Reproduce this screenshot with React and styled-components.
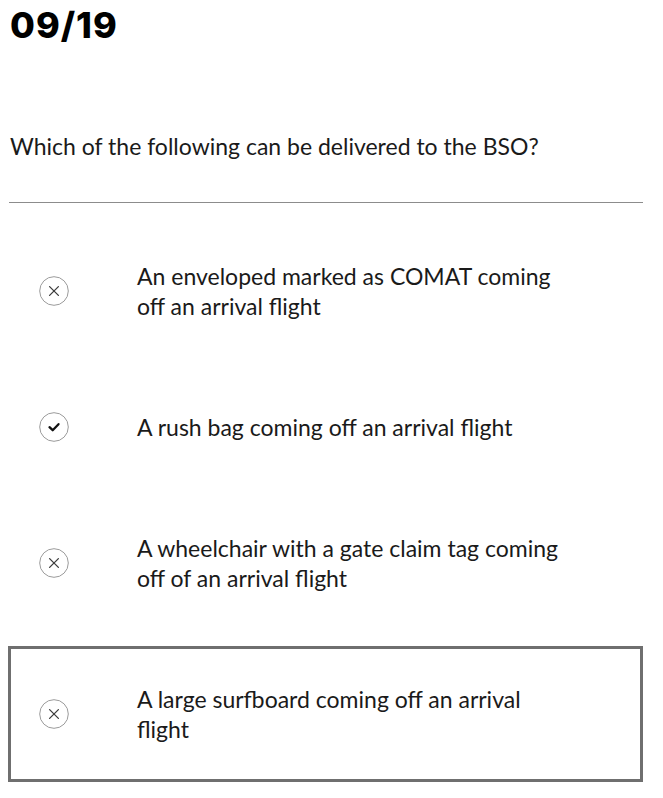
import React from "react";
import styled, { createGlobalStyle } from "styled-components";

const GlobalStyle = createGlobalStyle`
  body {
    margin: 0;
    background: #ffffff;
    font-family: "Lato", "Liberation Sans", sans-serif;
    color: #1c1c1c;
  }
`;

const options = [
  { text: "An enveloped marked as COMAT coming off an arrival flight", correct: false },
  { text: "A rush bag coming off an arrival flight", correct: true },
  { text: "A wheelchair with a gate claim tag coming off of an arrival flight", correct: false },
  { text: "A large surfboard coming off an arrival flight", correct: false, selected: true },
];

const StatusIcon = ({ correct }) => (
  <IconWrap>
    <svg width="30" height="30" viewBox="0 0 30 30">
      <circle cx="15" cy="15" r="14.3" fill="#fff" stroke="#9b9b9b" strokeWidth="1" />
      {correct ? (
        <polyline
          points="10.5,15.2 13.7,18.2 19.5,12.2"
          fill="none"
          stroke="#111"
          strokeWidth="2.3"
          strokeLinecap="round"
          strokeLinejoin="round"
        />
      ) : (
        <g stroke="#3c3c3c" strokeWidth="1.3" strokeLinecap="round">
          <line x1="10.6" y1="10.6" x2="19.4" y2="19.4" />
          <line x1="19.4" y1="10.6" x2="10.6" y2="19.4" />
        </g>
      )}
    </svg>
  </IconWrap>
);

const App = () => {
  return (
    <>
      <GlobalStyle />
      <Page>
        <Counter>09/19</Counter>
        <Question>Which of the following can be delivered to the BSO?</Question>
        <Divider />
        <Options>
          {options.map((o) => (
            <Option key={o.text} selected={o.selected}>
              <StatusIcon correct={o.correct} />
              <OptionText>{o.text}</OptionText>
            </Option>
          ))}
        </Options>
      </Page>
    </>
  );
};

const Page = styled.div`
  width: 635px;
  padding: 0 0 0 8px;
`;

const Counter = styled.h1`
  margin: 0;
  padding: 7px 0 0 2px;
  font-family: "Inter", "Liberation Sans", sans-serif;
  font-weight: 800;
  font-size: 36px;
  line-height: 36px;
  letter-spacing: 1px;
  color: #000;
`;

const Question = styled.p`
  margin: 88px 0 0 2px;
  font-size: 23px;
  line-height: 30px;
  color: #1a1a1a;
`;

const Divider = styled.hr`
  margin: 41px 0 0 1px;
  border: none;
  border-top: 1px solid #8c8c8c;
  height: 0;
`;

const Options = styled.div`
  display: flex;
  flex-direction: column;
  gap: 15px;
  margin-top: 20px;
`;

const Option = styled.div`
  display: flex;
  align-items: center;
  padding: 35px 0 35px 28px;
  border: 3px solid ${(p) => (p.selected ? "#6f6f6f" : "transparent")};
`;

const IconWrap = styled.div`
  width: 30px;
  height: 30px;
  flex-shrink: 0;
  margin-right: 68px;
  svg {
    display: block;
  }
`;

const OptionText = styled.div`
  max-width: 430px;
  font-size: 23px;
  line-height: 30px;
  color: #1a1a1a;
`;

export default App;
